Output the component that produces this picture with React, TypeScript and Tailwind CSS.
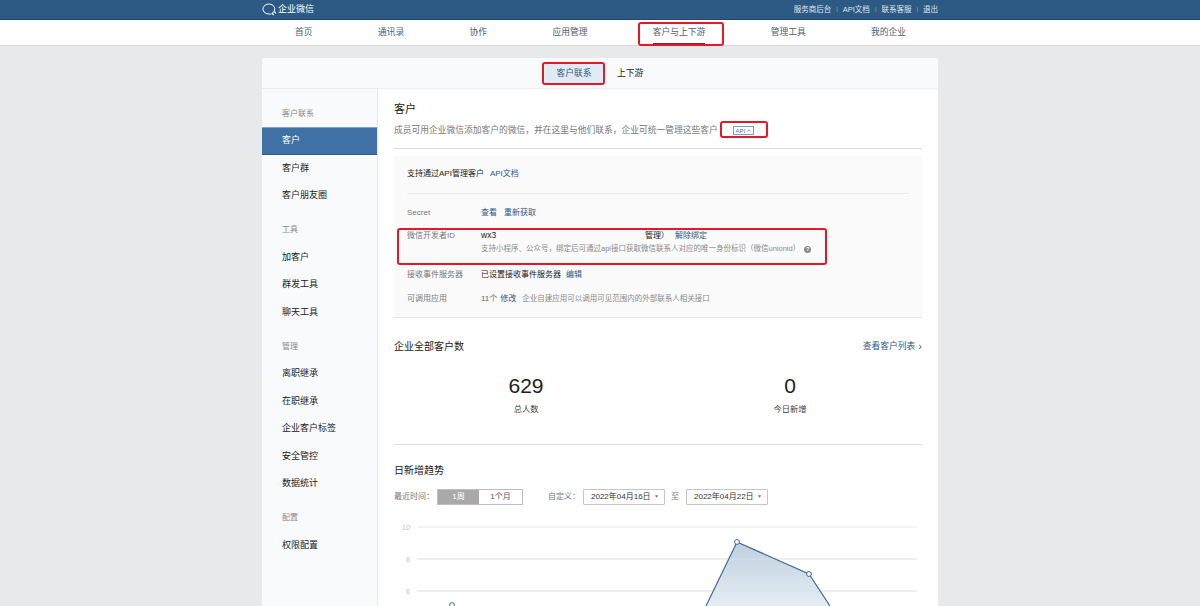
const font = { fontFamily: '"Liberation Sans", "Noto Sans CJK SC", sans-serif' };

const navItems = ["首页", "通讯录", "协作", "应用管理", "客户与上下游", "管理工具", "我的企业"];

const sideGroups = [
  { title: "客户联系", items: ["客户", "客户群", "客户朋友圈"] },
  { title: "工具", items: ["加客户", "群发工具", "聊天工具"] },
  { title: "管理", items: ["离职继承", "在职继承", "企业客户标签", "安全管控", "数据统计"] },
  { title: "配置", items: ["权限配置"] },
];

function RedBox({ className }: { className: string }) {
  return <div className={`absolute rounded-[3px] border-2 border-[#e5182a] ${className}`} />;
}

function Row({ label, children }: { label: string; children: React.ReactNode }) {
  return (
    <div className="flex h-[25px] items-center text-[8px]">
      <div className="w-[74px] shrink-0 text-[#787878]">{label}</div>
      <div className="flex items-center text-[#222]">{children}</div>
    </div>
  );
}

function Chart() {
  return (
    <svg width="528" height="90" viewBox="394 516 528 90" className="block" style={font}>
      <defs>
        <linearGradient id="area" x1="0" y1="0" x2="0" y2="1">
          <stop offset="0" stopColor="#bfcfdf" />
          <stop offset="1" stopColor="#e4edf5" />
        </linearGradient>
      </defs>
      {[
        [527, "10", 406],
        [559, "8", 408],
        [591, "6", 408],
      ].map(([y, t, x]) => (
        <g key={t as string}>
          <text x={x as number} y={(y as number) + 3} fontSize="7.5" textAnchor="middle" fill="#c4c4c4">
            {t}
          </text>
          <line x1="417" x2="917" y1={y as number} y2={y as number} stroke="#e8e8e8" strokeWidth="1" />
        </g>
      ))}
      <path d="M706 606 L737 542 L809 574 L830 606 Z" fill="url(#area)" />
      <line x1="417" x2="917" y1="559" y2="559" stroke="#dde3e9" strokeWidth="0.6" />
      <line x1="417" x2="917" y1="591" y2="591" stroke="#dde3e9" strokeWidth="0.6" />
      <path d="M706 606 L737 542 L809 574 L830 606" fill="none" stroke="#3f6b97" strokeWidth="1.2" />
      <circle cx="737" cy="542" r="2.4" fill="#fff" stroke="#3f6b97" strokeWidth="1" />
      <circle cx="809" cy="574" r="2.4" fill="#fff" stroke="#3f6b97" strokeWidth="1" />
      <circle cx="452" cy="605" r="2.4" fill="#fff" stroke="#3f6b97" strokeWidth="1" />
    </svg>
  );
}

function DateSelect({ value }: { value: string }) {
  return (
    <div className="flex h-[16px] w-[82px] items-center justify-between whitespace-nowrap rounded-[1px] border border-[#c6c6c6] bg-white pl-[7px] pr-[5px] text-[8px] text-[#333]">
      <span>{value}</span>
      <span className="text-[5px] text-[#777]">▼</span>
    </div>
  );
}

export default function App() {
  return (
    <div className="relative h-[606px] w-[1200px] overflow-hidden bg-[#e8e9ea]" style={font}>
      {/* top bar */}
      <div className="h-[20px] border-b border-[#1f4870] bg-[#2d5a85]">
        <div className="mx-auto flex h-full w-[676px] items-center justify-between text-[#dfe7ef]">
          <div className="flex items-center gap-[2px]">
            <svg width="14" height="13" viewBox="0 0 14 13" fill="none" stroke="#fff" strokeWidth="1">
              <path d="M10.8 9.8 A6 5 0 1 0 6.8 11 L8.4 11.2" strokeLinecap="round" />
              <path d="M10.2 10.4 L11.4 11.6 M12.8 9 L13.4 9.8" strokeLinecap="round" strokeWidth="1.4" />
            </svg>
            <span className="text-[9px] text-white">企业微信</span>
          </div>
          <div className="flex items-center text-[7.5px]">
            <span>服务商后台</span>
            <span className="mx-[5px] text-[6px] text-[#8fa8c0]">|</span>
            <span>API文档</span>
            <span className="mx-[5px] text-[6px] text-[#8fa8c0]">|</span>
            <span>联系客服</span>
            <span className="mx-[5px] text-[6px] text-[#8fa8c0]">|</span>
            <span>退出</span>
          </div>
        </div>
      </div>

      {/* nav */}
      <div className="h-[26px] border-b border-[#d8d8d8] bg-white">
        <div className="flex h-full items-stretch gap-[65.4px] pl-[295px] text-[8.75px] text-[#4d6074]">
          {navItems.map((n) => (
            <div
              key={n}
              className={`flex items-center whitespace-nowrap border-b-2 pt-[2px] ${
                n === "客户与上下游" ? "border-[#7a2a36]" : "border-transparent"
              }`}
            >
              {n}
            </div>
          ))}
        </div>
      </div>

      {/* card */}
      <div className="mx-auto mt-[12px] w-[676px] rounded-t-[3px] bg-white">
        <div className="flex h-[31px] items-center rounded-t-[3px] border-b border-[#ececec] bg-[#f9fafb] pl-[283px] pt-[1px]">
          <div className="flex h-[20px] w-[58px] items-center justify-center rounded-[2px] bg-[#e0ebf5] text-[8.75px] text-[#2d5a85]">
            客户联系
          </div>
          <div className="ml-[14px] text-[8.75px] text-[#222]">上下游</div>
        </div>

        <div className="flex">
          {/* sidebar */}
          <div className="h-[520px] w-[116px] shrink-0 border-r border-[#e6e6e6] bg-[#f9fafb] pt-[4px]">
            {sideGroups.map((g) => (
              <div key={g.title}>
                <div className="flex h-[34px] items-end pb-[7.5px] pl-[20px] text-[8px] text-[#8a8a8a]">{g.title}</div>
                {g.items.map((it) => (
                  <div
                    key={it}
                    className={`flex h-[27.5px] items-center pl-[20px] text-[9px] ${
                      it === "客户"
                        ? "border-y border-t-[#7fa5c9] border-b-[#2c5a85] bg-[#3f71a6] text-white"
                        : "text-[#222]"
                    }`}
                  >
                    {it}
                  </div>
                ))}
              </div>
            ))}
          </div>

          {/* main */}
          <div className="w-[560px] px-[16px]">
            <div className="pt-[12px] text-[11px] leading-[16px] text-[#222]">客户</div>
            <div className="mt-[7px] flex items-center text-[8.75px] leading-[13px] text-[#787878]">
              <span>成员可用企业微信添加客户的微信，并在这里与他们联系，企业可统一管理这些客户</span>
              <span className="ml-[15px] flex h-[9px] w-[21px] items-center justify-center gap-[2px] border border-[#7f9dbb] text-[6px] leading-none text-[#4d7397]">
                API
                <svg width="4" height="3" viewBox="0 0 4 3" fill="none" stroke="#4d7397" strokeWidth="0.7">
                  <path d="M0.4 2.5 L2 0.8 L3.6 2.5" />
                </svg>
              </span>
            </div>
            <div className="mt-[11px] h-px bg-[#dcdcdc]" />

            {/* panel */}
            <div className="mt-[7px] h-[161px] bg-[#fafafa] px-[13px] pt-[8px]">
              <div className="flex h-[20px] items-center gap-[6px] text-[8px] text-[#222]">
                <span>支持通过API管理客户</span>
                <span className="text-[#2d5a85]">API文档</span>
              </div>
              <div className="mt-[9px] h-px bg-[#ececec]" />
              <div className="mt-[6px]">
                <Row label="Secret">
                  <span className="text-[#2d5a85]">查看</span>
                  <span className="ml-[7px] text-[#2d5a85]">重新获取</span>
                </Row>
                <div className="mt-[3px] flex text-[8px]">
                  <div className="w-[74px] shrink-0 pt-[2px] leading-[12px] text-[#787878]">微信开发者ID</div>
                  <div>
                    <div className="flex h-[15px] items-center text-[#222]">
                      <span className="w-[164px] text-[8.5px]">wx3</span>
                      <span>管理）</span>
                      <span className="ml-[6px] text-[#2d5a85]">解除绑定</span>
                    </div>
                    <div className="flex h-[12px] items-center text-[7.5px] text-[#8a8a8a]">
                      支持小程序、公众号，绑定后可通过api接口获取微信联系人对应的唯一身份标识（微信unionid）
                      <span className="ml-[4px] flex h-[7px] w-[7px] items-center justify-center rounded-full bg-[#8a8a8a] text-[5.5px] font-bold text-white">
                        ?
                      </span>
                    </div>
                  </div>
                </div>
                <div className="mt-[7px] h-[24px]">
                  <Row label="接收事件服务器">
                    <span>已设置接收事件服务器</span>
                    <span className="ml-[5px] text-[#2d5a85]">编辑</span>
                  </Row>
                </div>
                <Row label="可调用应用">
                  <span className="text-[#666]">11个</span>
                  <span className="ml-[3px] text-[#2d5a85]">修改</span>
                  <span className="ml-[6px] text-[7.5px] text-[#8a8a8a]">企业自建应用可以调用可见范围内的外部联系人相关接口</span>
                </Row>
              </div>
            </div>
            <div className="h-px bg-[#e6e6e6]" />

            {/* totals */}
            <div className="mt-[22px] flex items-center justify-between">
              <span className="text-[10px] leading-[14px] text-[#222]">企业全部客户数</span>
              <span className="flex items-center gap-[3px] text-[8.75px] text-[#2d5a85]">
                查看客户列表
                <span className="pb-[2px] text-[11px] leading-none">›</span>
              </span>
            </div>
            <div className="mt-[21px] flex text-center">
              <div className="w-1/2">
                <div className="text-[21px] leading-[22px] text-[#222]">629</div>
                <div className="mt-[7px] text-[8.25px] leading-[12px] text-[#444]">总人数</div>
              </div>
              <div className="w-1/2">
                <div className="text-[21px] leading-[22px] text-[#222]">0</div>
                <div className="mt-[7px] text-[8.25px] leading-[12px] text-[#444]">今日新增</div>
              </div>
            </div>
            <div className="mt-[28px] h-px bg-[#e0e0e0]" />

            {/* trend */}
            <div className="mt-[19px] text-[10px] leading-[14px] text-[#222]">日新增趋势</div>
            <div className="mt-[11px] flex h-[16px] items-center text-[8px] text-[#787878]">
              <span className="w-[43px]">最近时间：</span>
              <div className="flex h-[16px] w-[86px] border border-[#bdbdbd]">
                <div className="flex w-[41px] items-center justify-center bg-[#a9a9a9] text-white">1周</div>
                <div className="flex flex-1 items-center justify-center bg-white text-[#555]">1个月</div>
              </div>
              <span className="ml-[25px] w-[35px]">自定义：</span>
              <DateSelect value="2022年04月16日" />
              <span className="ml-[6px] mr-[7px]">至</span>
              <DateSelect value="2022年04月22日" />
            </div>
            <div className="mt-[11px]">
              <Chart />
            </div>
          </div>
        </div>
      </div>

      {/* annotations */}
      <RedBox className="left-[638px] top-[22px] h-[24px] w-[86px]" />
      <RedBox className="left-[542px] top-[62px] h-[23px] w-[63px]" />
      <RedBox className="left-[720px] top-[121px] h-[17px] w-[48px]" />
      <RedBox className="left-[397px] top-[228px] h-[37px] w-[430px]" />
    </div>
  );
}
